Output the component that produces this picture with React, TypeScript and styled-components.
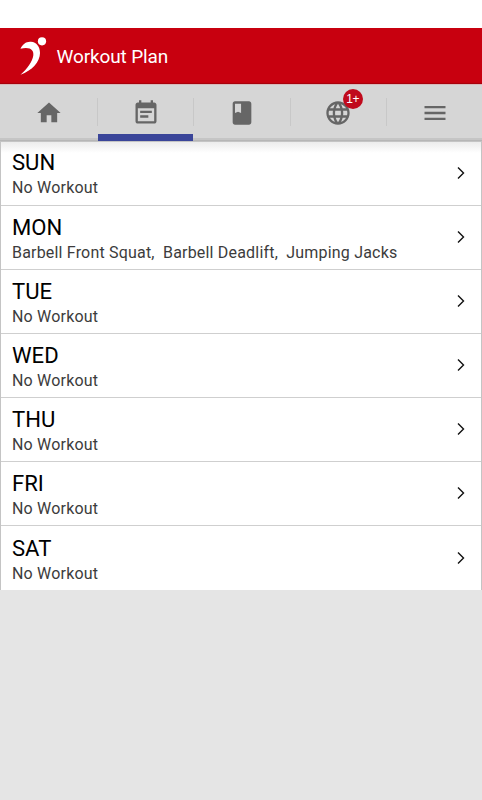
import React from "react";
import styled, { createGlobalStyle } from "styled-components";

const GlobalStyle = createGlobalStyle`
  * { box-sizing: border-box; }
  body {
    margin: 0;
    background: #e5e5e5;
    font-family: Roboto, "Liberation Sans", sans-serif;
  }
`;

const Screen = styled.div`
  display: flex;
  flex-direction: column;
  width: 482px;
  height: 800px;
  overflow: hidden;
  background: #e5e5e5;
`;

const StatusBar = styled.div`
  flex: none;
  height: 28px;
  background: #fff;
`;

const AppBar = styled.header`
  flex: none;
  display: flex;
  align-items: center;
  height: 56px;
  padding-left: 18px;
  background: #c8000f;
  box-shadow: inset 0 -2px 1px -1px #a3000c;
`;

const Logo = styled.svg`
  width: 30px;
  height: 40px;
`;

const Title = styled.h1`
  margin: 2px 0 0 8.5px;
  font-size: 19px;
  line-height: 24px;
  letter-spacing: -0.12px;
  font-weight: 400;
  color: #fff;
`;

const TabBar = styled.nav`
  flex: none;
  display: grid;
  grid-template-columns: repeat(5, 96.4px);
  height: 57px;
  background: #d6d6d6;
  box-shadow: inset 0 1px 0 #d8b9bb, inset 0 -1px 0 #b6b6b6, inset 0 -3px 0 #c5c5c5;
`;

const Tab = styled.button<{ $active?: boolean }>`
  position: relative;
  display: flex;
  align-items: center;
  justify-content: center;
  height: 57px;
  padding: 0 0 0 2px;
  border: 0;
  background: linear-gradient(#c8c8c8, #c8c8c8) 0.6px 14px / 1px 28px no-repeat;
  color: #666;

  &:first-child { background: none; }

  &::after {
    content: "";
    display: ${(p) => (p.$active ? "block" : "none")};
    position: absolute;
    left: 1.6px;
    right: -0.6px;
    bottom: 0;
    height: 7px;
    background: #3a4599;
  }
`;

const TabIcon = styled.svg`
  width: 28px;
  height: 28px;
  fill: currentColor;
`;

const Badge = styled.span`
  position: absolute;
  left: 53.5px;
  top: 5px;
  width: 20px;
  height: 20px;
  border-radius: 50%;
  background: #c00a1c;
  color: #fff;
  font-size: 12px;
  line-height: 21px;
  letter-spacing: -0.3px;
  text-align: center;
`;

const DayList = styled.main`
  flex: none;
  display: grid;
  grid-template-rows: 65px repeat(6, 64.1px);
  height: 449px;
  border: solid #c4c4c4;
  border-width: 0 1px;
  background: linear-gradient(#c4c4c4 1px, #ececec 1px, #fff 12px);
`;

const DayRow = styled.div`
  display: flex;
  align-items: center;
  justify-content: space-between;
  padding: 0 12px 0 11px;
  border-bottom: 1px solid #cfcfcf;

  &:last-child { border-bottom: 0; }
`;

const DayText = styled.div`
  display: flex;
  flex-direction: column;
  padding-top: 4px;
`;

const DayName = styled.span`
  font-size: 22.1px;
  line-height: 26px;
  color: #000;
`;

const DayPlan = styled.span`
  font-size: 16px;
  line-height: 26px;
  letter-spacing: 0.19px;
  color: #3c3c3c;
  white-space: pre;
`;

const Chevron = styled.svg`
  width: 16px;
  height: 16px;
  margin-bottom: 1px;
  fill: none;
  stroke: #111;
  stroke-width: 1.4;
`;

const tabs = [
  { name: "Home", path: "M10 20v-6h4v6h5v-8h3L12 3 2 12h3v8z" },
  {
    name: "Workout plan",
    path: "M17 10H7v2h10v-2zm2-7h-1V1h-2v2H8V1H6v2H5c-1.11 0-1.99.9-1.99 2L3 19c0 1.1.89 2 2 2h14c1.1 0 2-.9 2-2V5c0-1.1-.9-2-2-2zm0 16H5V8h14v11zm-5-5H7v2h7v-2z",
    active: true,
  },
  {
    name: "Log book",
    path: "M18 2H6c-1.1 0-2 .9-2 2v16c0 1.1.9 2 2 2h12c1.1 0 2-.9 2-2V4c0-1.1-.9-2-2-2zM6 4h5.2v8l-2.6-1.1L6 12V4z",
  },
  {
    name: "Community",
    path: "M11.99 2C6.47 2 2 6.48 2 12s4.47 10 9.99 10C17.52 22 22 17.52 22 12S17.52 2 11.99 2zm6.93 6h-2.95c-.32-1.25-.78-2.45-1.38-3.56 1.84.63 3.37 1.91 4.33 3.56zM12 4.04c.83 1.2 1.48 2.53 1.91 3.96h-3.82c.43-1.43 1.08-2.76 1.91-3.96zM4.26 14C4.1 13.36 4 12.69 4 12s.1-1.36.26-2h3.38c-.08.66-.14 1.32-.14 2s.06 1.34.14 2H4.26zm.82 2h2.95c.32 1.25.78 2.45 1.38 3.56-1.84-.63-3.37-1.9-4.33-3.56zm2.95-8H5.08c.96-1.66 2.49-2.93 4.33-3.56C8.81 5.55 8.35 6.75 8.03 8zM12 19.96c-.83-1.2-1.48-2.53-1.91-3.96h3.82c-.43 1.43-1.08 2.76-1.91 3.96zM14.34 14H9.66c-.09-.66-.16-1.32-.16-2s.07-1.35.16-2h4.68c.09.65.16 1.32.16 2s-.07 1.34-.16 2zm.25 5.56c.6-1.11 1.06-2.31 1.38-3.56h2.95c-.96 1.65-2.49 2.93-4.33 3.56zM16.36 14c.08-.66.14-1.32.14-2s-.06-1.34-.14-2h3.38c.16.64.26 1.31.26 2s-.1 1.36-.26 2h-3.38z",
    badge: "1+",
  },
  { name: "Menu", path: "M3 18h18v-2H3v2zm0-5h18v-2H3v2zm0-7v2h18V6H3z" },
];

const days = [
  { name: "SUN", plan: "No Workout" },
  { name: "MON", plan: "Barbell Front Squat,  Barbell Deadlift,  Jumping Jacks" },
  { name: "TUE", plan: "No Workout" },
  { name: "WED", plan: "No Workout" },
  { name: "THU", plan: "No Workout" },
  { name: "FRI", plan: "No Workout" },
  { name: "SAT", plan: "No Workout" },
];

export default function App() {
  return (
    <Screen>
      <GlobalStyle />
      <StatusBar />
      <AppBar>
        <Logo viewBox="0 0 30 40" fill="#fff" aria-hidden="true">
          <circle cx="24" cy="5.3" r="4.1" />
          <path d="M2.5 12.8C4.5 8 8.5 5.2 13 5.7C18.5 6.2 22 10.5 22 17C22 26 14 34.5 2.5 38.8C9 33 14.5 25.5 15.3 19.5C16 14.5 12.5 10.3 2.5 12.8Z" />
        </Logo>
        <Title>Workout Plan</Title>
      </AppBar>
      <TabBar>
        {tabs.map((tab) => (
          <Tab key={tab.name} $active={tab.active} aria-label={tab.name}>
            <TabIcon viewBox="0 0 24 24">
              <path d={tab.path} />
            </TabIcon>
            {tab.badge && <Badge>{tab.badge}</Badge>}
          </Tab>
        ))}
      </TabBar>
      <DayList>
        {days.map((day) => (
          <DayRow key={day.name}>
            <DayText>
              <DayName>{day.name}</DayName>
              <DayPlan>{day.plan}</DayPlan>
            </DayText>
            <Chevron viewBox="0 0 16 16">
              <path d="M5 2.5 10.5 8 5 13.5" />
            </Chevron>
          </DayRow>
        ))}
      </DayList>
    </Screen>
  );
}
